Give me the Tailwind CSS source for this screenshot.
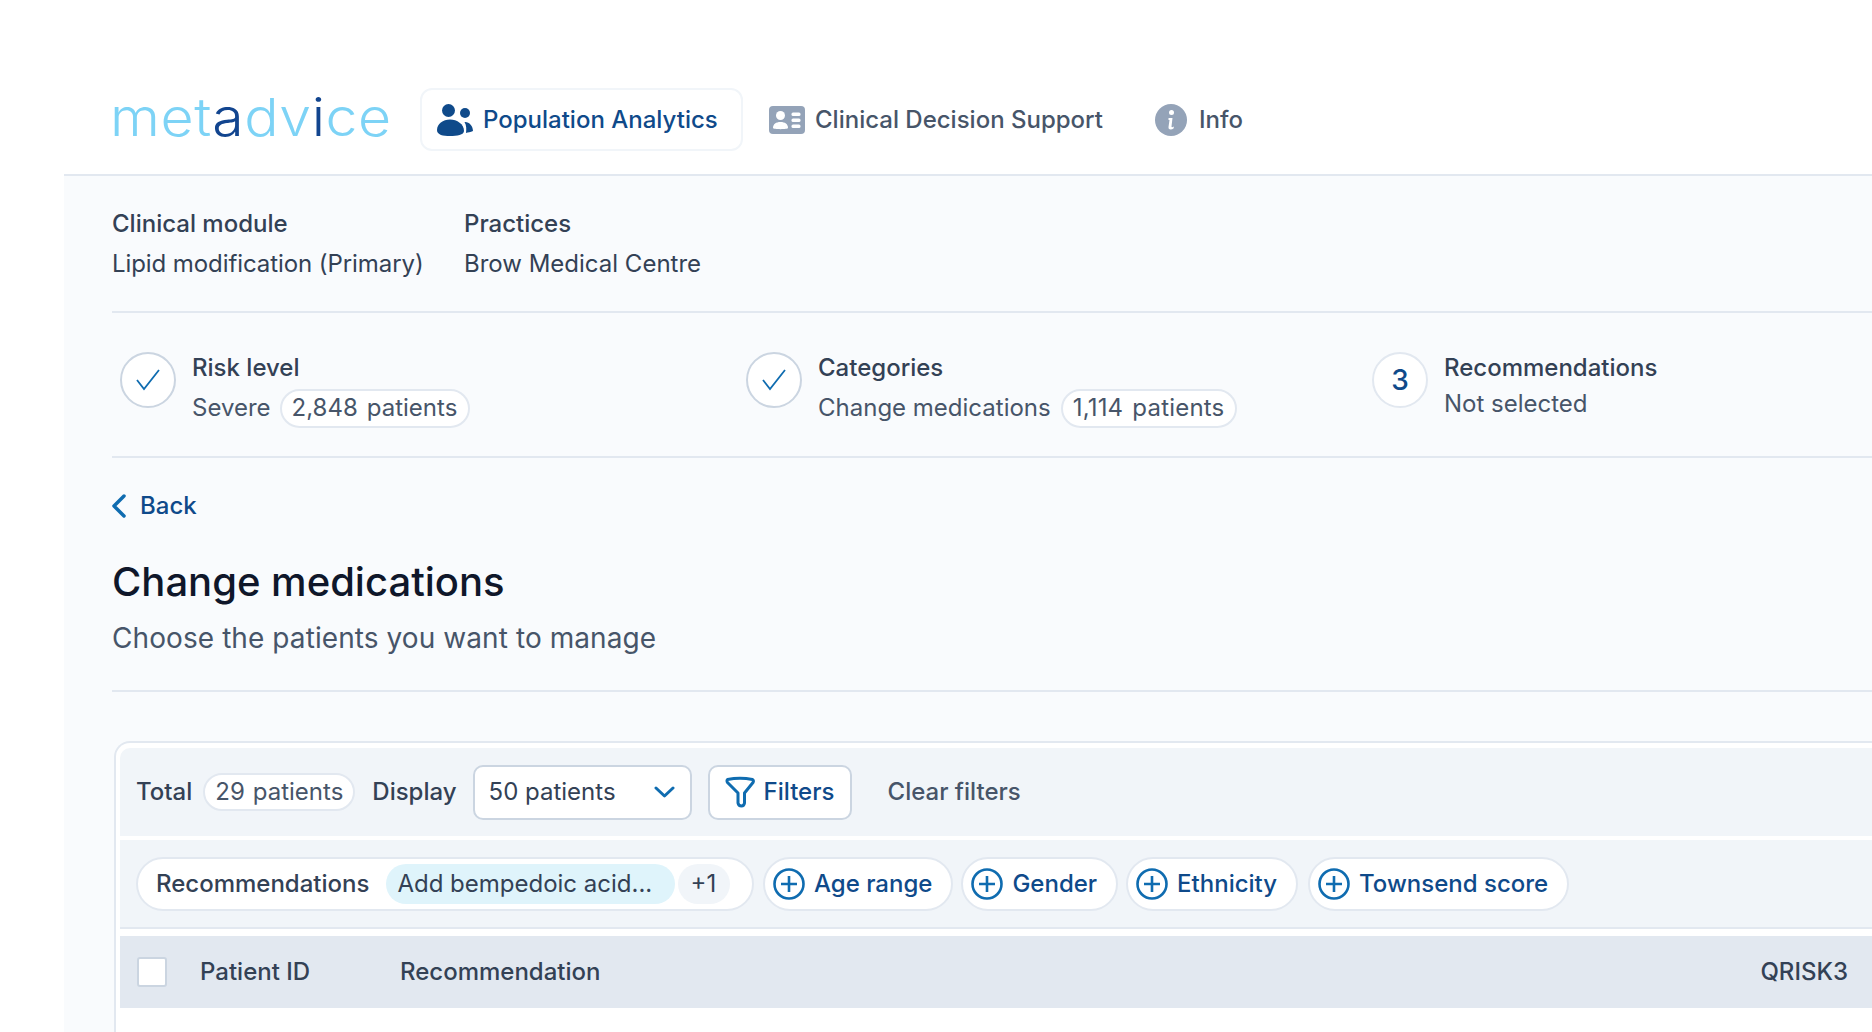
<!DOCTYPE html>
<html lang="en">
<head>
<meta charset="utf-8">
<script src="https://cdn.jsdelivr.net/npm/@tailwindcss/browser@4"></script>
<title>Metadvice</title>
</head>
<body class="m-0">
<div class="w-[1872px] h-[1032px] overflow-hidden bg-white flex flex-col font-['Inter',sans-serif] text-[24px] text-[#334155]">
  <header class="h-[174px] pt-[88px] pl-[110px] flex items-start shrink-0">
    <div class="w-[310px] h-[63px] flex items-center -mt-[2px]"><div class="font-light text-[52px] tracking-[0.5px] leading-none text-[#7dd3f6] scale-x-[1.1] origin-left"><span>met</span><span class="text-[#12458f]">a</span><span>dv</span><span class="text-[#12458f]">i</span><span>ce</span></div></div>
    <a class="h-[63px] w-[323px] flex items-center gap-[10px] pl-[15px] border-2 border-[#f1f5f9] rounded-[12px] font-medium text-[#0f4a8a]">
      <svg class="w-[36px] h-[32px] shrink-0" viewBox="0 0 36 32" fill="#0f4a8a"><circle cx="11.5" cy="6.5" r="6.5"/><circle cx="28" cy="9" r="5"/><path d="M0 26C0 20 6 15.5 13 15.5C20 15.5 27 20 27 27C27 31 20 32 13 32C6 32 0 31 0 26Z"/><path d="M27.5 18C32 17.5 36 22 36 27C33.5 28 31 28.5 29 29C29.5 25 29.5 21 27.5 18Z"/></svg>
      <span>Population Analytics</span>
    </a>
    <a class="h-[63px] flex items-center gap-[10px] ml-[26px] text-[#475569] font-[450]">
      <svg class="w-[36px] h-[28px] shrink-0" viewBox="0 0 36 28"><rect width="36" height="28" rx="4" fill="#94a3b8"/><circle cx="11.5" cy="9.5" r="4.5" fill="#fff"/><path d="M4 22C4 18 7 16 11.5 16C16 16 19 18 19 22C19 23.5 4 23.5 4 22Z" fill="#fff"/><rect x="22.5" y="6.5" width="9" height="3.5" rx="1.5" fill="#fff"/><rect x="22.5" y="12.5" width="9" height="3.5" rx="1.5" fill="#fff"/><rect x="22.5" y="18.5" width="9" height="3.5" rx="1.5" fill="#fff"/></svg>
      <span>Clinical Decision Support</span>
    </a>
    <a class="h-[63px] flex items-center gap-[12px] ml-[52px] text-[#475569] font-[450]">
      <svg class="w-[32px] h-[32px] shrink-0" viewBox="0 0 32 32"><circle cx="16" cy="16" r="16" fill="#94a3b8"/><circle cx="16.5" cy="8.5" r="2.5" fill="#fff"/><path d="M13.5 14H17.5L16.5 22.5C16.4 23.5 17.5 23.5 19 22.5L18.5 24.5C16.5 26 13.2 26 13.5 23L14.5 16H13.5Z" fill="#fff"/></svg>
      <span>Info</span>
    </a>
  </header>

  <main class="flex-1 ml-[64px] pl-[48px] bg-[#f9fbfd] border-t-2 border-[#e2e8f0] flex flex-col min-h-0">
    <section class="h-[137px] pt-[28px] shrink-0 border-b-2 border-[#e2e8f0] flex">
      <div class="w-[352px] leading-[40px]"><div class="font-[450]">Clinical module</div><div class="tracking-[-0.08px]">Lipid modification (Primary)</div></div>
      <div class="leading-[40px]"><div class="font-[450]">Practices</div><div>Brow Medical Centre</div></div>
    </section>

    <section class="h-[145px] pt-[39px] shrink-0 border-b-2 border-[#e2e8f0] flex">
      <div class="w-[626px] pl-[8px] flex gap-[16px] shrink-0">
        <div class="w-[56px] h-[56px] rounded-full border-2 border-[#cbd5e1] bg-white flex items-center justify-center shrink-0"><svg class="w-[24px] h-[22px]" viewBox="0 0 24 22" fill="none" stroke="#0f6cb0" stroke-width="1.8"><path d="M1 11L8 20L23 1"/></svg></div>
        <div class="-mt-[2px]"><div class="h-[36px] leading-[36px] font-[450]">Risk level</div><div class="h-[40px] mt-[2px] flex items-center text-[#475569]">Severe<span class="ml-[9px] h-[39px] pl-[10px] pr-[11px] rounded-full border-2 border-[#e2e8f0] bg-white flex items-center gap-[9px]"><span>2,848</span><span>patients</span></span></div></div>
      </div>
      <div class="w-[626px] pl-[8px] flex gap-[16px] shrink-0">
        <div class="w-[56px] h-[56px] rounded-full border-2 border-[#cbd5e1] bg-white flex items-center justify-center shrink-0"><svg class="w-[24px] h-[22px]" viewBox="0 0 24 22" fill="none" stroke="#0f6cb0" stroke-width="1.8"><path d="M1 11L8 20L23 1"/></svg></div>
        <div class="-mt-[2px]"><div class="h-[36px] leading-[36px] font-[450]">Categories</div><div class="h-[40px] mt-[2px] flex items-center text-[#475569]">Change medications<span class="ml-[10px] h-[39px] pl-[10px] pr-[11px] rounded-full border-2 border-[#e2e8f0] bg-white flex items-center gap-[9px] tracking-[0.2px]"><span>1,114</span><span>patients</span></span></div></div>
      </div>
      <div class="pl-[8px] flex gap-[16px] shrink-0">
        <div class="w-[56px] h-[56px] rounded-full border-2 border-[#e2e8f0] bg-white flex items-center justify-center shrink-0 font-medium text-[#0f4a8a] text-[28px]">3</div>
        <div class="-mt-[2px]"><div class="h-[36px] leading-[36px] font-[450]">Recommendations</div><div class="h-[36px] leading-[36px] text-[#475569]">Not selected</div></div>
      </div>
    </section>

    <a class="h-[36px] mt-[30px] shrink-0 flex items-center gap-[14px] font-medium text-[#0f4a8a]"><svg class="w-[14px] h-[24px]" viewBox="0 0 14 24" fill="none" stroke="#0f6cb0" stroke-width="3.5" stroke-linecap="round" stroke-linejoin="round"><path d="M12 2L2 12L12 22"/></svg><span>Back</span></a>
    <h1 class="h-[56px] leading-[56px] mt-[30px] shrink-0 text-[40px] font-medium text-[#0f172a]">Change medications</h1>
    <p class="h-[40px] leading-[40px] mt-[8px] shrink-0 text-[28px] tracking-[0.08px] text-[#475569]">Choose the patients you want to manage</p>
    <div class="mt-[32px] h-[2px] bg-[#e2e8f0] shrink-0"></div>

    <section class="mt-[49px] ml-[2px] flex-1 bg-white border-t-2 border-l-2 border-[#e2e8f0] rounded-tl-[16px] pt-[5px] pl-[4px]">
      <div class="h-[88px] bg-[#f1f5f9] rounded-tl-[10px] flex items-center pl-[16px]">
        <span class="font-[450]">Total</span>
        <span class="ml-[11px] h-[38px] px-[10px] rounded-full border-2 border-[#e2e8f0] bg-white flex items-center gap-[8px] text-[#475569]"><span>29</span><span>patients</span></span>
        <span class="ml-[17px] font-[450]">Display</span>
        <div class="ml-[16px] w-[219px] h-[55px] rounded-[10px] border-2 border-[#cbd5e1] bg-white flex items-center justify-between pl-[14px] pr-[15px]"><span>50 patients</span><svg class="w-[21px] h-[12px]" viewBox="0 0 21 12" fill="none" stroke="#0f6cb0" stroke-width="3" stroke-linecap="round" stroke-linejoin="round"><path d="M2 2L10.5 10L19 2"/></svg></div>
        <div class="ml-[16px] w-[144px] h-[55px] rounded-[10px] border-2 border-[#cbd5e1] bg-white flex items-center gap-[9px] pl-[15px] font-[450] text-[#0f4a8a]"><svg class="w-[30px] h-[32px] shrink-0" viewBox="0 0 30 32" fill="none" stroke="#0f6cb0" stroke-width="3" stroke-linejoin="round"><path d="M2.5 3.5Q15 1 27.5 3.5Q29 4.5 28 6.5L19.5 17V27Q19 30 16.5 30Q13.5 30 13 27V17L2.5 6.5Q1.5 4.5 2.5 3.5Z"/></svg><span>Filters</span></div>
        <span class="ml-[36px] font-[450] text-[#475569]">Clear filters</span>
      </div>

      <div class="mt-[4px] h-[89px] bg-[#f1f5f9] border-b-2 border-[#e2e8f0] flex items-center pl-[16px] gap-[8px]">
        <div class="w-[618px] h-[54px] rounded-full border-2 border-[#e2e8f0] bg-white flex items-center pl-[18px]">
          <span class="font-[450]">Recommendations</span>
          <span class="ml-[17px] w-[289px] h-[40px] rounded-full bg-[#dff4fb] flex items-center pl-[11px]">Add bempedoic acid...</span>
          <span class="ml-[3px] w-[52px] h-[40px] rounded-full bg-[#f1f5f9] flex items-center justify-center pr-[2px]">+1</span>
        </div>
        <div class="ml-[1px] h-[54px] rounded-full border-2 border-[#e2e8f0] bg-white flex items-center gap-[9px] pl-[8px] pr-[19px] font-[450] text-[#0f4a8a]"><svg class="w-[32px] h-[32px] shrink-0" viewBox="0 0 32 32" fill="none" stroke="#0f6cb0" stroke-width="2.6"><circle cx="16" cy="16" r="14.5"/><path d="M16 8V24M8 16H24"/></svg><span>Age range</span></div>
        <div class="h-[54px] rounded-full border-2 border-[#e2e8f0] bg-white flex items-center gap-[9px] pl-[8px] pr-[19px] font-[450] text-[#0f4a8a]"><svg class="w-[32px] h-[32px] shrink-0" viewBox="0 0 32 32" fill="none" stroke="#0f6cb0" stroke-width="2.6"><circle cx="16" cy="16" r="14.5"/><path d="M16 8V24M8 16H24"/></svg><span>Gender</span></div>
        <div class="h-[54px] rounded-full border-2 border-[#e2e8f0] bg-white flex items-center gap-[9px] pl-[8px] pr-[19px] font-[450] text-[#0f4a8a]"><svg class="w-[32px] h-[32px] shrink-0" viewBox="0 0 32 32" fill="none" stroke="#0f6cb0" stroke-width="2.6"><circle cx="16" cy="16" r="14.5"/><path d="M16 8V24M8 16H24"/></svg><span>Ethnicity</span></div>
        <div class="ml-[2px] h-[54px] rounded-full border-2 border-[#e2e8f0] bg-white flex items-center gap-[9px] pl-[8px] pr-[19px] font-[450] text-[#0f4a8a]"><svg class="w-[32px] h-[32px] shrink-0" viewBox="0 0 32 32" fill="none" stroke="#0f6cb0" stroke-width="2.6"><circle cx="16" cy="16" r="14.5"/><path d="M16 8V24M8 16H24"/></svg><span>Townsend score</span></div>
      </div>

      <div class="mt-[7px] h-[72px] bg-[#e2e8f0] flex items-center pl-[17px] font-[450]">
        <span class="w-[30px] h-[30px] rounded-[3px] border-2 border-[#cbd5e1] bg-white shrink-0"></span>
        <span class="ml-[33px] w-[200px]">Patient ID</span>
        <span>Recommendation</span>
        <span class="ml-auto mr-[24px]">QRISK3</span>
      </div>
    </section>
  </main>
</div>
</body>
</html>
